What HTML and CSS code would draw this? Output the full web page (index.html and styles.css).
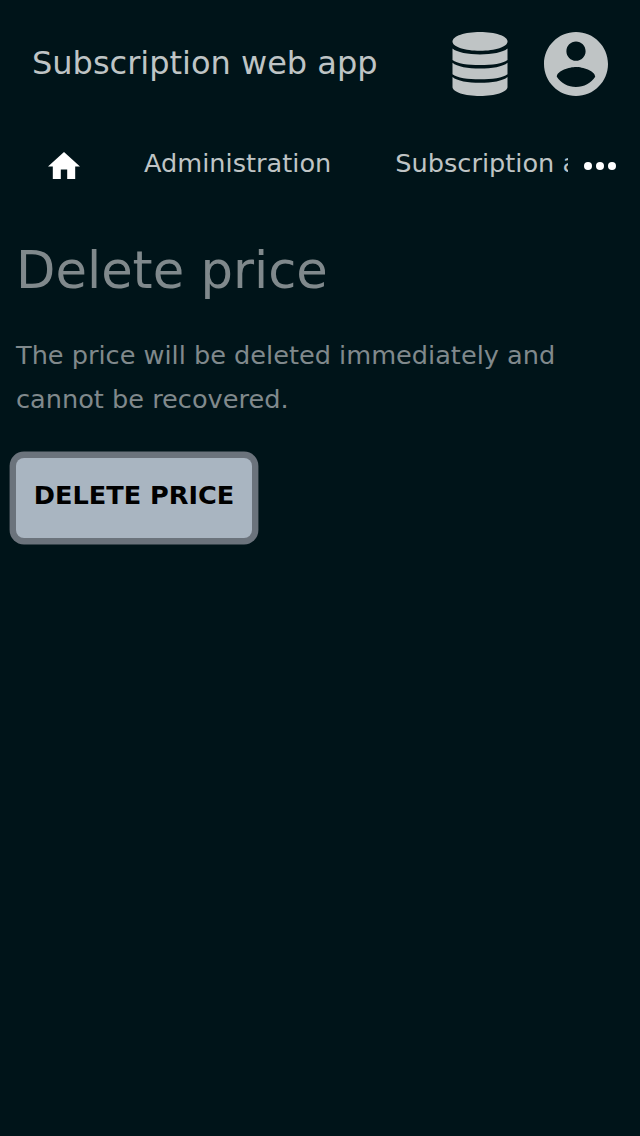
FILE: index.html
```html
<!DOCTYPE html>
<html lang="en">
<head>
<meta charset="utf-8">
<title>Delete price</title>
<link rel="stylesheet" href="styles.css">
</head>
<body>
<header class="header">
  <span class="brand">Subscription web app</span>
  <svg class="database" viewBox="0 0 56 64"><path d="M.5 9.500C.5 4 13 0 28 0s27.500 4 27.500 9.500S43 18.800 28 18.800.5 15 .5 9.500z"/><path d="M.5 16.500C5 20.500 16 22.400 28 22.400s23-1.900 27.500-5.900V28C51 31.600 40 33.100 28 33.100S5 31.600.5 28z"/><path d="M.5 30.700C5 34.700 16 36.500 28 36.500s23-1.800 27.500-5.800V42.200C51 45.800 40 47.300 28 47.300S5 45.800.5 42.200z"/><path d="M.5 44.900C5 48.900 16 50.700 28 50.700s23-1.800 27.500-5.800V55C55.500 60 43 64 28 64S.5 60 .5 55z"/></svg>
  <svg class="account" viewBox="2 2 20 20"><path d="M12 2C6.480 2 2 6.480 2 12s4.480 10 10 10 10-4.480 10-10S17.520 2 12 2zm0 3c1.660 0 3 1.340 3 3s-1.340 3-3 3-3-1.340-3-3 1.340-3 3-3zm0 14.200c-2.500 0-4.710-1.280-6-3.220.030-1.990 4-3.080 6-3.080 1.990 0 5.970 1.090 6 3.080-1.290 1.940-3.500 3.220-6 3.220z"/></svg>
</header>
<nav class="nav">
  <svg class="home" viewBox="2 3 20 17"><path d="M10 20v-6h4v6h5v-8h3L12 3 2 12h3v8z"/></svg>
  <span class="link">Administration</span>
  <span class="link clipped">Subscription administration</span>
  <svg class="more" viewBox="0 0 32 8"><circle cx="4" cy="4" r="4"/><circle cx="16" cy="4" r="4"/><circle cx="28" cy="4" r="4"/></svg>
</nav>
<main class="main">
  <h1 class="title">Delete price</h1>
  <p class="text">The price will be deleted immediately and cannot be recovered.</p>
  <button class="button">DELETE PRICE</button>
</main>
</body>
</html>
```
FILE: styles.css
```css
body { margin: 0; min-height: 1136px; background: #001419; font-family: "DejaVu Sans", sans-serif; }
svg { display: block; flex: none; }
.header { display: flex; align-items: center; height: 128px; padding: 0 32px; box-sizing: border-box; color: #bfc4c5; fill: #bfc4c5; }
.brand { flex: 1; font-size: 32px; line-height: 48px; padding-bottom: 2px; }
.database { width: 56px; height: 64px; margin-right: 36px; }
.account { width: 64px; height: 64px; }
.nav { display: flex; align-items: flex-start; height: 96px; padding: 16px 24px 0 48px; box-sizing: border-box; color: #bfc4c5; }
.home { width: 32px; height: 27.200px; margin: 8.300px 64px 0 0; fill: #fff; }
.link { font-size: 25.600px; line-height: 38px; white-space: nowrap; margin-right: 64px; }
.clipped { flex: 1; min-width: 0; overflow: hidden; margin-right: 16px; }
.more { width: 32px; height: 8px; margin-top: 18px; fill: #fff; }
.main { padding: 16px; color: #80898c; }
.title { margin: 0; font-size: 51.200px; font-weight: 400; line-height: 61px; }
.text { margin: 32px 0 37px; font-size: 25.600px; line-height: 44px; }
.button { display: block; width: 236px; height: 80px; padding: 0 0 6px; border: 0; border-radius: 8px; background: #a9b5c1; color: #000; box-shadow: 0 0 0 6.400px #6b737c; font: bold 25.600px "DejaVu Sans", sans-serif; white-space: nowrap; }
```
